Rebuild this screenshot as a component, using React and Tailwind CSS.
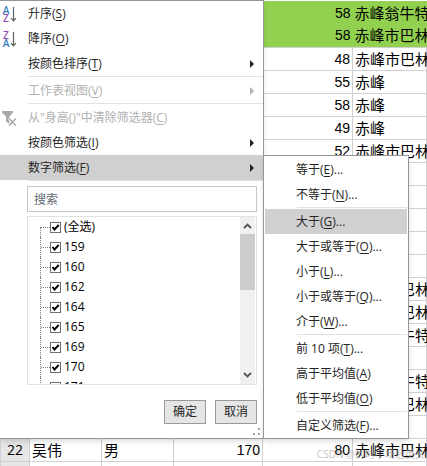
const rows = [
  { id: 3, weight: "58", city: "赤峰翁牛特", marked: true },
  { id: 4, weight: "58", city: "赤峰市巴林", marked: true },
  { id: 5, weight: "48", city: "赤峰市巴林" },
  { id: 6, weight: "55", city: "赤峰" },
  { id: 7, weight: "58", city: "赤峰" },
  { id: 8, weight: "49", city: "赤峰" },
  { id: 9, weight: "52", city: "赤峰市巴林" },
  { id: 10 },
  { id: 11 },
  { id: 12 },
  { id: 13 },
  { id: 14 },
  { id: 15, city: "赤峰市巴林" },
  { id: 16, city: "赤峰市巴林" },
  { id: 17, city: "赤峰翁牛特" },
  { id: 18 },
  { id: 19, city: "赤峰翁牛特" },
  { id: 20, city: "赤峰市巴林" },
  { id: 21 },
  { id: 22, name: "吴伟", gender: "男", height: "170", weight: "80", city: "赤峰市巴林" },
  { id: 23 },
];

const filterItems = [
  { label: "等于", hotkey: "E", more: true },
  { label: "不等于", hotkey: "N", more: true },
  null,
  { label: "大于", hotkey: "G", more: true, active: true },
  { label: "大于或等于", hotkey: "O", more: true },
  { label: "小于", hotkey: "L", more: true },
  { label: "小于或等于", hotkey: "Q", more: true },
  { label: "介于", hotkey: "W", more: true },
  null,
  { label: "前 10 项", hotkey: "T", more: true },
  { label: "高于平均值", hotkey: "A" },
  { label: "低于平均值", hotkey: "O" },
  null,
  { label: "自定义筛选", hotkey: "F", more: true },
];

const values = ["(全选)", "159", "160", "162", "164", "165", "169", "170", "171"];

const SortIcon = ({ descending }) => (
  <svg width="18" height="18" viewBox="0 0 18 18" aria-hidden="true">
    <g fontFamily="Open Sans, sans-serif" fontSize="10" fontWeight="600" textAnchor="middle">
      <text x="4" y="9" fill={descending ? "#8e4bb5" : "#3b7fc0"}>{descending ? "Z" : "A"}</text>
      <text x="4" y="17" fill={descending ? "#3b7fc0" : "#8e4bb5"}>{descending ? "A" : "Z"}</text>
    </g>
    <path d="M11.5 2v14M9 13.2l2.5 2.6 2.5-2.6" fill="none" stroke="#5f5f5f" strokeWidth="1.2" />
  </svg>
);

const ClearFilterIcon = () => (
  <svg width="16" height="16" viewBox="0 0 16 16" fill="none" aria-hidden="true">
    <path d="M0 1h11v1.5L7.5 6.5V14L4 11.5v-5L0 2.5z" fill="#a8a8a8" />
    <path d="M7 8.5l7 7M14 8.5l-7 7" stroke="#fff" strokeWidth="3" />
    <path d="M7 8.5l7 7M14 8.5l-7 7" stroke="#a8a8a8" strokeWidth="1.4" />
  </svg>
);

const Label = ({ label, hotkey, more }) => (
  <span className="whitespace-nowrap">
    {label}(<span className="underline underline-offset-2">{hotkey}</span>){more && "..."}
  </span>
);

const MenuItem = ({ icon, label, hotkey, arrow, disabled, active }) => (
  <button
    type="button"
    disabled={disabled}
    className={`flex h-[25px] w-full items-center pr-2 text-left disabled:text-[#b1b1b1] ${active ? "bg-[#d0d0d0]" : ""}`}
  >
    <span className="w-7 shrink-0 pl-0.5">{icon}</span>
    <Label label={label} hotkey={hotkey} />
    {arrow && (
      <svg className="ml-auto" width="6" height="8" viewBox="0 0 6 8" fill="currentColor" aria-hidden="true">
        <path d="M1 0l4 4-4 4z" />
      </svg>
    )}
  </button>
);

const Separator = ({ className }) => <div className={`h-0.5 border-t border-[#e1e1e1] ${className}`} />;

const Sheet = () => (
  <table className="w-full table-fixed border-collapse text-[15px] leading-[22px] text-black">
    <colgroup>
      <col className="w-[29px]" />
      <col className="w-[72px]" />
      <col className="w-[72px]" />
      <col className="w-[89px]" />
      <col className="w-[90px]" />
      <col />
    </colgroup>
    <tbody>
      {rows.map((row) => (
        <tr
          key={row.id}
          className={`h-[23px] ${row.marked ? "bg-[#92d050]" : "[&>*]:border [&>*]:border-[#d0d0d0]"}`}
        >
          <th className="bg-[#e6e6e6] text-center text-sm leading-[22px] font-normal">{row.id}</th>
          <td className="pl-0.5">{row.name}</td>
          <td className="pl-0.5">{row.gender}</td>
          <td className="pr-0.5 text-right font-['Liberation_Sans','Noto_Sans_CJK_SC',sans-serif] text-sm leading-[22px]">{row.height}</td>
          <td className="pr-0.5 text-right font-['Liberation_Sans','Noto_Sans_CJK_SC',sans-serif] text-sm leading-[22px]">{row.weight}</td>
          <td className="pl-0.5 whitespace-nowrap">{row.city}</td>
        </tr>
      ))}
    </tbody>
  </table>
);

const ValueList = () => (
  <div className="flex h-[169px] overflow-hidden border border-[#e1e1e1] pr-px text-black">
    <ul className="min-w-0 flex-1 overflow-hidden pl-3">
      {values.map((value, index) => (
        <li key={value} className="flex h-5 items-center">
          <span className={`w-px self-stretch border-l border-dotted border-[#808080] ${index === 0 ? "mt-2.5" : ""}`} />
          <span className="w-[9px] border-t border-dotted border-[#808080]" />
          <label className="flex items-center gap-[3px]">
            <span className="grid">
              <input
                type="checkbox"
                defaultChecked
                className="peer col-start-1 row-start-1 size-[11px] appearance-none border border-[#707070] bg-white"
              />
              <svg
                className="pointer-events-none invisible col-start-1 row-start-1 peer-checked:visible"
                width="11"
                height="11"
                viewBox="0 0 11 11"
                fill="none"
                aria-hidden="true"
              >
                <path d="M2.5 5l2 2.5L8.7 3" stroke="#000" strokeWidth="1.9" />
              </svg>
            </span>
            {value}
          </label>
        </li>
      ))}
    </ul>
    <div className="flex w-[15px] flex-col bg-[#f0f0f0] text-[#555]">
      <svg width="15" height="17" viewBox="0 0 15 17" fill="none" aria-hidden="true">
        <path d="M4 11l3.5-3.5L11 11" stroke="currentColor" strokeWidth="1.8" />
      </svg>
      <div className="h-14 bg-[#cdcdcd]" />
      <svg className="mt-auto" width="15" height="17" viewBox="0 0 15 17" fill="none" aria-hidden="true">
        <path d="M4 6l3.5 3.5L11 6" stroke="currentColor" strokeWidth="1.8" />
      </svg>
    </div>
  </div>
);

const FilterMenu = () => (
  <div className="absolute top-0 left-0 w-[264px] border-t border-r border-b border-[#969696] bg-white shadow-md">
    <MenuItem icon={<SortIcon />} label="升序" hotkey="S" />
    <MenuItem icon={<SortIcon descending />} label="降序" hotkey="O" />
    <MenuItem label="按颜色排序" hotkey="T" arrow />
    <Separator className="ml-7" />
    <MenuItem label="工作表视图" hotkey="V" arrow disabled />
    <Separator className="ml-7" />
    <MenuItem icon={<ClearFilterIcon />} label={'从"身高()"中清除筛选器'} hotkey="C" disabled />
    <MenuItem label="按颜色筛选" hotkey="I" arrow />
    <MenuItem label="数字筛选" hotkey="F" arrow active />
    <Separator className="ml-7" />

    <div className="flex flex-col gap-1 pt-1 pr-1.5 pl-[27px]">
      <input
        type="text"
        aria-label="搜索"
        placeholder="搜索"
        className="h-[26px] w-full border border-[#c6c6c6] px-1.5 outline-none placeholder:text-[#5f6872]"
      />
      <ValueList />
    </div>

    <div className="mt-[15px] flex justify-end gap-[9px] pr-1.5">
      <button type="button" className="h-6 w-[42px] border border-[#999] bg-[#e5e5e5]">确定</button>
      <button type="button" className="h-6 w-[42px] border border-[#999] bg-[#e5e5e5]">取消</button>
    </div>
    <div className="flex h-3.5 items-end justify-end pr-[3px] pb-[3px]">
      <svg width="7" height="7" viewBox="0 0 7 7" fill="#a5a5a5" aria-hidden="true">
        <path d="M5 0h2v2H5zM0 5h2v2H0zM5 5h2v2H5z" />
      </svg>
    </div>
  </div>
);

const NumberFilterMenu = () => (
  <div className="absolute top-[155px] left-[263px] w-[146px] border border-[#969696] bg-white p-px pb-0 shadow-md">
    {filterItems.map((item, index) =>
      item ? (
        <button
          key={index}
          type="button"
          className={`flex h-[25px] w-full items-center pl-[31px] ${item.active ? "bg-[#d0d0d0]" : ""}`}
        >
          <Label label={item.label} hotkey={item.hotkey} more={item.more} />
        </button>
      ) : (
        <Separator key={index} className="ml-8" />
      )
    )}
  </div>
);

const App = () => {
  return (
    <main className="relative h-screen overflow-hidden bg-white pt-px font-['Open_Sans','Noto_Sans_CJK_SC',sans-serif] text-xs text-[#262626]">
      <Sheet />
      <FilterMenu />
      <NumberFilterMenu />
      <p className="absolute right-0.5 bottom-1 text-[10px] leading-4 whitespace-nowrap text-[#999]/60">CSDN @的时小场后英夫</p>
    </main>
  );
};

export default App;
